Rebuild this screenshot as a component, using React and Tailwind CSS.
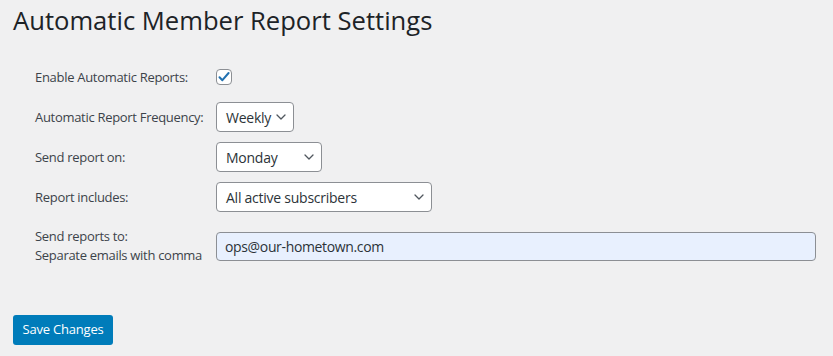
const Chevron = () => (
  <svg width="10" height="6" viewBox="0 0 10 6" fill="none">
    <path d="M1 1l4 4 4-4" stroke="#50575e" strokeWidth="1.3" strokeLinecap="round" strokeLinejoin="round" />
  </svg>
);

const FakeSelect = ({ value, width }) => (
  <div
    className={`flex items-center justify-between h-[30px] pl-[9px] pr-[7px] bg-white border border-[#8c8f94] rounded-[4px] text-[14px] tracking-[-0.25px] text-[#2c3338] ${width}`}
  >
    <span>{value}</span>
    <Chevron />
  </div>
);

const Row = ({ label, children, className = "h-[40px]" }) => (
  <div className={`flex items-center ${className}`}>
    <div className="w-[181px] shrink-0 text-[13px] leading-[19px] tracking-[-0.3px] text-[#3c434a]">{label}</div>
    {children}
  </div>
);

export default function App() {
  return (
    <div className="min-h-[356px] bg-[#f0f0f1] font-['Open_Sans',sans-serif] px-[13px] pt-[4px]">
      <h1 className="text-[25.6px] leading-[33px] text-[#1d2327]">Automatic Member Report Settings</h1>

      <div className="mt-[20px] pl-[22px]">
        <Row label="Enable Automatic Reports:">
          <div className="w-[16px] h-[16px] bg-white border border-[#8c8f94] rounded-[4px] flex items-center justify-center">
            <svg width="14" height="14" viewBox="0 0 14 14" fill="none">
              <path d="M2.5 7.2l2.9 3L11.6 3" stroke="#2271b1" strokeWidth="2" strokeLinecap="round" strokeLinejoin="round" />
            </svg>
          </div>
        </Row>
        <Row label="Automatic Report Frequency:">
          <FakeSelect value="Weekly" width="w-[78px]" />
        </Row>
        <Row label="Send report on:">
          <FakeSelect value="Monday" width="w-[106px]" />
        </Row>
        <Row label="Report includes:">
          <FakeSelect value="All active subscribers" width="w-[216px]" />
        </Row>
        <Row label={<>Send reports to:<br />Separate emails with comma</>} className="h-[40px] mt-[9px]">
          <div className="w-[600px] h-[29px] flex items-center px-[8px] bg-[#e8f0fe] border border-[#8c8f94] rounded-[4px] text-[14px] tracking-[-0.35px] text-[#2c3338]">
            ops@our-hometown.com
          </div>
        </Row>
      </div>

      <button className="mt-[49px] w-[100px] h-[30px] bg-[#007cba] rounded-[3px] text-white text-[13px] tracking-[-0.2px]">
        Save Changes
      </button>
    </div>
  );
}
